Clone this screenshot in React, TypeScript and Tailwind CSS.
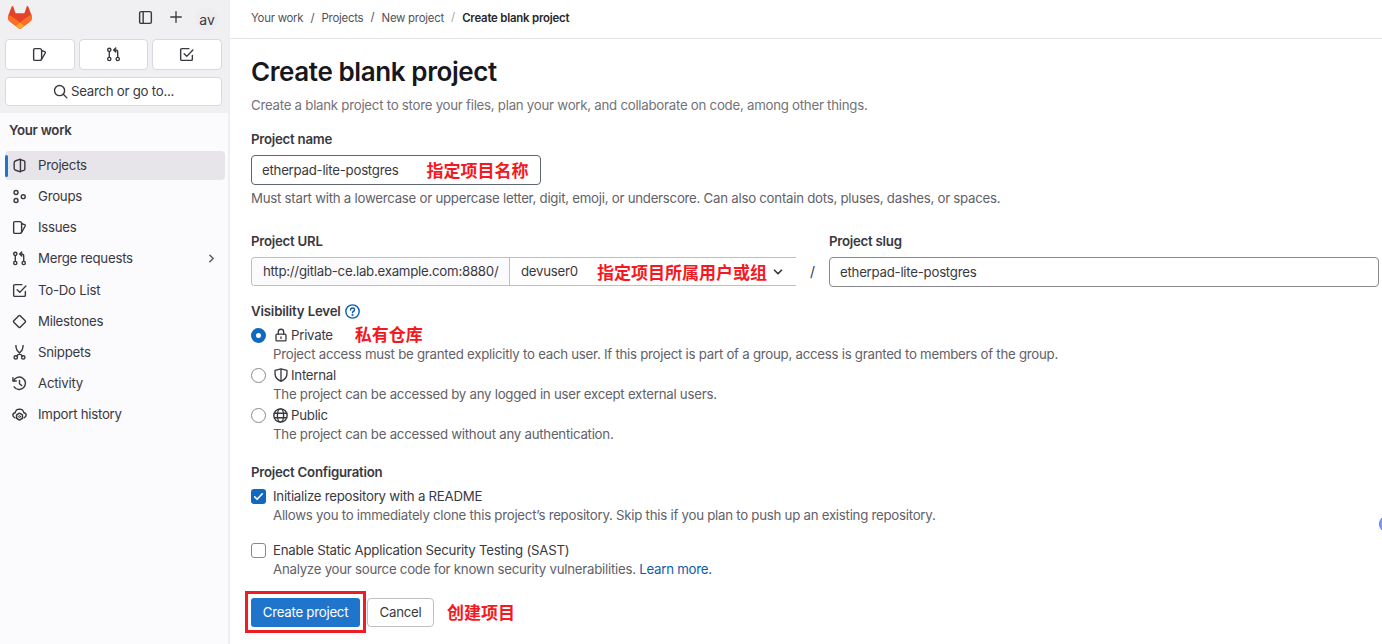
import type { ReactNode } from "react";

type IconProps = { className?: string; children: ReactNode };

function Svg({ className = "size-[15px]", children }: IconProps) {
  return (
    <svg
      viewBox="0 0 16 16"
      className={`shrink-0 ${className}`}
      fill="none"
      stroke="currentColor"
      strokeWidth="1.5"
      strokeLinejoin="round"
      strokeLinecap="round"
    >
      {children}
    </svg>
  );
}

const ProjectIcon = () => (
  <Svg>
    <path d="M9 1.2 L4 2.9 Q2.3 3.5 2.3 5.2 V10.8 Q2.3 12.5 4 13.1 L9 14.8 Z" />
    <path d="M9 1.9 L12.6 2.8 Q13.7 3.1 13.7 4.2 V11.8 Q13.7 12.9 12.6 13.2 L9 14.1" />
  </Svg>
);
const GroupIcon = () => (
  <Svg>
    <circle cx="4.3" cy="3.7" r="2.1" />
    <circle cx="4.3" cy="12.3" r="2.1" />
    <circle cx="12" cy="8.2" r="2.1" />
  </Svg>
);
const IssueIcon = () => (
  <Svg>
    <path d="M3 1.75 H8.2 Q10.25 1.75 10.25 3.8 V12.2 Q10.25 14.25 8.2 14.25 H3 Q1.75 14.25 1.75 13 V3 Q1.75 1.75 3 1.75 Z" />
    <path d="M10.5 4 L13.5 4.9 Q14.6 5.3 14.1 6.4 L10.5 12.6" />
  </Svg>
);
const MergeIcon = () => (
  <Svg>
    <circle cx="3.5" cy="3" r="1.75" />
    <circle cx="3.5" cy="12.8" r="1.75" />
    <circle cx="12.5" cy="12.8" r="1.75" />
    <path d="M3.5 5 V11 M12.5 11 V5.5 Q12.5 3.2 10.2 3.2 H8.6 M10.4 1 L8.2 3.2 L10.4 5.4" />
  </Svg>
);
const TodoIcon = () => (
  <Svg>
    <path d="M10.5 1.75 H3 Q1.75 1.75 1.75 3 V13 Q1.75 14.25 3 14.25 H13 Q14.25 14.25 14.25 13 V9" />
    <path d="M5.5 7.2 L8.3 10 L14.8 3.2" />
  </Svg>
);
const MilestoneIcon = () => (
  <Svg>
    <path d="M7.3 1.9 Q8 1.2 8.7 1.9 L14.1 7.3 Q14.8 8 14.1 8.7 L8.7 14.1 Q8 14.8 7.3 14.1 L1.9 8.7 Q1.2 8 1.9 7.3 Z" />
  </Svg>
);
const SnippetIcon = () => (
  <Svg>
    <circle cx="4" cy="13.2" r="1.8" />
    <circle cx="12" cy="13.2" r="1.8" />
    <path d="M4.2 .5 Q4.1 3.3 5.4 5.6 L10.8 11.7 M11.8 .5 Q11.9 3.3 10.6 5.6 L5.2 11.7" />
  </Svg>
);
const HistoryIcon = () => (
  <Svg>
    <path d="M1.6 5.3 A6.6 6.6 0 1 1 2.3 11.5" />
    <path d="M1 1.8 V5.4 H4.6" />
    <path d="M8 4.7 V8.2 L10.3 10.2" />
  </Svg>
);
const ImportIcon = () => (
  <Svg>
    <path d="M3.2 11.6 Q.9 10.8 .9 8.6 Q1 6.4 3.4 6.1 Q4 2.4 8 2.3 Q12 2.4 12.6 6.1 Q15 6.4 15.1 8.6 Q15.1 10.8 12.8 11.6" />
    <path d="M8 6.6 L11.1 8.4 V12 L8 13.9 L4.9 12 V8.4 Z" strokeWidth="1.6" />
    <circle cx="8" cy="10.2" r="1" strokeWidth="1" />
  </Svg>
);
const SidebarIcon = () => (
  <Svg>
    <rect x="1.75" y="1.75" width="12.5" height="12.5" rx="1.5" />
    <path d="M5.5 2 V14" />
  </Svg>
);
const PlusIcon = () => (
  <Svg className="size-[14px]">
    <path d="M8 2 V14 M2 8 H14" />
  </Svg>
);
const SearchIcon = () => (
  <Svg>
    <circle cx="7" cy="7" r="5.4" />
    <path d="M11 11 L14.8 14.8" />
  </Svg>
);
const LockIcon = () => (
  <Svg className="size-[14px]">
    <rect x="2.3" y="7" width="11.4" height="7.8" rx="1" />
    <path d="M4.9 7 V4.5 Q4.9 1.4 8 1.4 Q11.1 1.4 11.1 4.5 V7 M8 10.2 V12" />
  </Svg>
);
const ShieldIcon = () => (
  <Svg className="size-[14px]">
    <path d="M8 .9 L14.8 2.6 V7 Q14.6 12.2 8 15.2 Q1.4 12.2 1.2 7 V2.6 Z M8 1 V15" />
  </Svg>
);
const GlobeIcon = () => (
  <Svg className="size-[15px]">
    <circle cx="8" cy="8" r="7.1" />
    <ellipse cx="8" cy="8" rx="3.3" ry="7.1" />
    <path d="M1.5 5.6 H14.5 M1.5 10.4 H14.5" />
  </Svg>
);
const HelpIcon = () => (
  <Svg className="size-[15px] text-[#0b5cad]">
    <circle cx="8" cy="8" r="7.1" />
    <path d="M5.9 6.4 Q5.9 4.3 8 4.3 Q10.2 4.3 10.2 6.2 Q10.2 7.4 8.8 8 Q8 8.4 8 9.4" />
    <circle cx="8" cy="11.8" r=".4" />
  </Svg>
);
const Chevron = ({ className }: { className: string }) => (
  <Svg className={className}>
    <path d="M4 6 L8 10 L12 6" strokeWidth="2" />
  </Svg>
);

function Logo() {
  return (
    <svg viewBox="0 0 25 24" className="h-[23px] w-6 shrink-0">
      <path
        fill="#E24329"
        d="m24.507 9.5-.034-.09L21.082.562a.896.896 0 0 0-1.694.091l-2.29 7.01H7.825L5.535.653a.898.898 0 0 0-1.694-.09L.451 9.411.416 9.5a6.297 6.297 0 0 0 2.09 7.278l.012.01.03.022 5.16 3.867 2.56 1.935 1.554 1.176a1.051 1.051 0 0 0 1.268 0l1.555-1.176 2.56-1.935 5.197-3.89.014-.01A6.297 6.297 0 0 0 24.507 9.5Z"
      />
      <path
        fill="#FC6D26"
        d="m24.507 9.5-.034-.09a11.44 11.44 0 0 0-4.56 2.051l-7.447 5.632 4.742 3.584 5.197-3.89.014-.01A6.297 6.297 0 0 0 24.507 9.5Z"
      />
      <path
        fill="#FCA326"
        d="m7.707 20.677 2.56 1.935 1.555 1.176a1.051 1.051 0 0 0 1.268 0l1.555-1.176 2.56-1.935-4.743-3.584-4.755 3.584Z"
      />
      <path
        fill="#FC6D26"
        d="M5.01 11.461a11.43 11.43 0 0 0-4.56-2.05L.416 9.5a6.297 6.297 0 0 0 2.09 7.278l.012.01.03.022 5.16 3.867 4.745-3.584-7.444-5.632Z"
      />
    </svg>
  );
}

const primaryNav = [
  { label: "Projects", icon: <ProjectIcon />, active: true },
  { label: "Groups", icon: <GroupIcon /> },
  { label: "Issues", icon: <IssueIcon /> },
  { label: "Merge requests", icon: <MergeIcon />, expandable: true },
];

const secondaryNav = [
  { label: "To-Do List", icon: <TodoIcon /> },
  { label: "Milestones", icon: <MilestoneIcon /> },
  { label: "Snippets", icon: <SnippetIcon /> },
  { label: "Activity", icon: <HistoryIcon /> },
  { label: "Import history", icon: <ImportIcon /> },
];

type NavItemProps = { label: string; icon: ReactNode; active?: boolean; expandable?: boolean };

function NavItem({ label, icon, active, expandable }: NavItemProps) {
  return (
    <div className="flex h-[31px] items-center">
      <div
        className={`flex h-[29px] w-full items-center rounded-[4px] pr-[7px] ${active ? "bg-[#e7e5e9]" : ""}`}
      >
        <span className={`h-[22px] w-[3px] rounded-full ${active ? "bg-[#1f75cb]" : ""}`} />
        <span className="ml-[4px] flex">{icon}</span>
        <span className="ml-[11px] flex-1 pt-px">{label}</span>
        {expandable && <Chevron className="size-[13px] -rotate-90 text-[#626168]" />}
      </div>
    </div>
  );
}

function Sidebar() {
  const box = "flex items-center justify-center rounded-[4px] border border-[#d9d8de] bg-white";
  return (
    <aside className="flex w-[230px] shrink-0 flex-col border-r-2 border-[#efeff3] bg-[#fbfafd]">
      <div className="h-[113px] bg-[#f0f0f3] pr-[6px] pl-[5px]">
        <div className="flex h-[39px] items-center pb-[5px] pl-[3px]">
          <Logo />
          <div className="mr-[3px] ml-auto flex items-center">
            <SidebarIcon />
            <span className="ml-[16px] flex">
              <PlusIcon />
            </span>
            <span className="mt-1 ml-[12px] flex size-6 items-center justify-center rounded-full bg-[#ededf1] text-[14px] tracking-normal">
              av
            </span>
          </div>
        </div>
        <div className="grid h-[31px] grid-cols-3 gap-[4px]">
          <div className={box}>
            <IssueIcon />
          </div>
          <div className={box}>
            <MergeIcon />
          </div>
          <div className={`${box} pr-px`}>
            <TodoIcon />
          </div>
        </div>
        <div className={`${box} mt-[7px] h-[29px] gap-[3px]`}>
          <SearchIcon />
          <span>Search or go to...</span>
        </div>
      </div>
      <div className="mt-[7px] pl-[9px] leading-5 font-semibold">Your work</div>
      <nav className="mt-[10px] flex flex-col pr-[3px] pl-[5px]">
        {primaryNav.map((item) => (
          <NavItem key={item.label} {...item} />
        ))}
        <div className="mt-px flex flex-col">
          {secondaryNav.map((item) => (
            <NavItem key={item.label} {...item} />
          ))}
        </div>
      </nav>
    </aside>
  );
}

function Note({ className, children }: IconProps) {
  return (
    <span
      className={`font-['Noto_Sans_CJK_SC',sans-serif] text-[17px] leading-6 font-bold tracking-normal whitespace-nowrap text-[#f5191f] ${className}`}
    >
      {children}
    </span>
  );
}

function Radio({ checked }: { checked?: boolean }) {
  return (
    <span
      className={`size-[15px] shrink-0 rounded-full bg-white ${checked ? "border-[5px] border-[#1068bf]" : "border border-[#89888d]"}`}
    />
  );
}

type OptionProps = { label: string; help: string; icon: ReactNode; checked?: boolean; note?: string };

function VisibilityOption({ label, help, icon, checked, note }: OptionProps) {
  return (
    <div className="h-[40px]">
      <div className="flex h-[20px] items-center">
        <Radio checked={checked} />
        <span className="ml-[7px] flex w-[15px] justify-center">{icon}</span>
        <span className="ml-[3px] pt-[2px]">{label}</span>
        {note && <Note className="mb-[3px] ml-[22px]">{note}</Note>}
      </div>
      <p className="ml-[22px] leading-[18px] text-[#626168]">{help}</p>
    </div>
  );
}

export default function App() {
  return (
    <div className="flex h-[644px] w-[1382px] overflow-hidden bg-white font-['Inter',sans-serif] text-[13.25px] tracking-[-0.255px] text-[#3a383f]">
      <Sidebar />
      <main className="relative flex min-w-0 flex-1 flex-col">
        <header className="flex h-[39px] shrink-0 items-center gap-[7.2px] border-b border-[#e4e4e9] pb-px pl-[21px] text-[11.4px] tracking-[-0.25px] text-[#535158]">
          <span>Your work</span>
          <span>/</span>
          <span>Projects</span>
          <span className="pb-[2px]">/</span>
          <span>New project</span>
          <span className="pb-[2px] text-[#a4a3a8]">/</span>
          <span className="font-semibold tracking-[-0.2px] text-[#28272d]">Create blank project</span>
        </header>

        <div className="flex flex-col pr-[3px] pl-[21px]">
          <h1 className="mt-[15px] text-[26px] leading-9 font-semibold tracking-[-0.4px] text-[#18171d]">
            Create blank project
          </h1>
          <p className="mt-[5px] leading-5 text-[#737278]">
            Create a blank project to store your files, plan your work, and collaborate on code, among other things.
          </p>

          <label className="mt-[14px] leading-5 font-semibold">Project name</label>
          <div className="mt-[6px] flex h-[30px] w-[290px] items-center rounded-[4px] border border-[#5c6570] pl-[10px]">
            <span className="pt-[2px]">etherpad-lite-postgres</span>
            <Note className="ml-[28px]">指定项目名称</Note>
          </div>
          <p className="mt-[3px] leading-5 text-[#626168]">
            Must start with a lowercase or uppercase letter, digit, emoji, or underscore. Can also contain dots,
            pluses, dashes, or spaces.
          </p>

          <div className="mt-[23px] flex">
            <div className="w-[545px]">
              <div className="leading-5 font-semibold">Project URL</div>
              <div className="mt-[6px] flex h-[29px] rounded-l-[4px] border border-r-0 border-[#bfbfc3]">
                <div className="flex w-[258px] items-center rounded-l-[4px] border-r border-[#bfbfc3] bg-[#fbfafd] pl-[11px] whitespace-nowrap">
                  http://gitlab-ce.lab.example.com:8880/
                </div>
                <div className="flex flex-1 items-center pl-[11px]">
                  devuser0
                  <Note className="ml-[19px]">指定项目所属用户或组</Note>
                  <Chevron className="ml-[4px] size-[14px]" />
                </div>
              </div>
            </div>
            <div className="w-[33px] pt-[31px] text-center text-[14px] leading-5">/</div>
            <div className="flex-1">
              <div className="leading-5 font-semibold">Project slug</div>
              <div className="mt-[6px] flex h-[30px] items-center rounded-[4px] border border-[#89888d] pt-[2px] pl-[10px]">
                etherpad-lite-postgres
              </div>
            </div>
          </div>

          <div className="mt-[14px] flex h-5 items-center gap-[4px] font-semibold">
            <span className="pt-[2px] tracking-[-0.18px]">Visibility Level</span>
            <HelpIcon />
          </div>
          <div className="mt-[4px]">
            <VisibilityOption
              checked
              label="Private"
              icon={<LockIcon />}
              note="私有仓库"
              help="Project access must be granted explicitly to each user. If this project is part of a group, access is granted to members of the group."
            />
            <VisibilityOption
              label="Internal"
              icon={<ShieldIcon />}
              help="The project can be accessed by any logged in user except external users."
            />
            <VisibilityOption
              label="Public"
              icon={<GlobeIcon />}
              help="The project can be accessed without any authentication."
            />
          </div>

          <div className="mt-[17px] leading-5 font-semibold">Project Configuration</div>
          <div className="mt-[4px] flex h-5 items-center gap-[7px]">
            <span className="flex size-[15px] items-center justify-center rounded-[3px] bg-[#1068bf] text-white">
              <Svg className="size-[11px]">
                <path d="M2.5 8.5 L6 12 L13.5 4" strokeWidth="2.4" />
              </Svg>
            </span>
            <span className="pt-[2px]">Initialize repository with a README</span>
          </div>
          <p className="ml-[22px] leading-[18px] text-[#626168]">
            Allows you to immediately clone this project’s repository. Skip this if you plan to push up an existing
            repository.
          </p>
          <div className="mt-[16px] flex h-5 items-center gap-[7px]">
            <span className="size-[15px] rounded-[3px] border border-[#89888d] bg-white" />
            <span className="pt-[2px]">Enable Static Application Security Testing (SAST)</span>
          </div>
          <p className="ml-[22px] leading-[18px] text-[#626168]">
            Analyze your source code for known security vulnerabilities.{" "}
            <a className="text-[#0b5cad]">Learn more.</a>
          </p>

          <div className="mt-[13px] -ml-[6px] flex items-center">
            <div className="flex h-[42px] w-[121px] items-center justify-center border-3 border-[#ee1c25]">
              <button className="h-[29px] w-[109px] rounded-[3px] bg-[#1f75cb] pt-[2px] text-white">
                Create project
              </button>
            </div>
            <button className="ml-[1px] h-[29px] w-[67px] rounded-[4px] border border-[#bfbfc3] bg-white pt-[2px]">
              Cancel
            </button>
            <Note className="ml-[13px]">创建项目</Note>
          </div>
        </div>

        <span className="absolute top-[515px] left-[1149px] size-[18px] rounded-full border border-[#5b7fe0] bg-[#7b9bf5]" />
      </main>
    </div>
  );
}
